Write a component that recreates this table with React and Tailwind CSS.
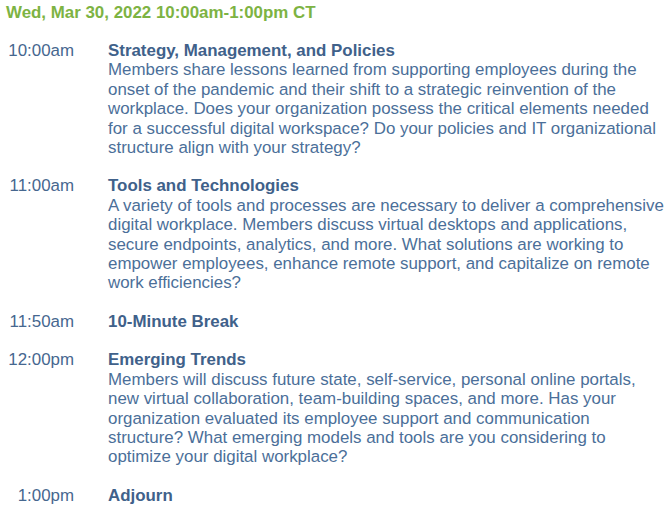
import React from "react";

const sessions = [
  {
    time: "10:00am",
    title: "Strategy, Management, and Policies",
    body: "Members share lessons learned from supporting employees during the onset of the pandemic and their shift to a strategic reinvention of the workplace. Does your organization possess the critical elements needed for a successful digital workspace? Do your policies and IT organizational structure align with your strategy?",
  },
  {
    time: "11:00am",
    title: "Tools and Technologies",
    body: "A variety of tools and processes are necessary to deliver a comprehensive digital workplace. Members discuss virtual desktops and applications, secure endpoints, analytics, and more. What solutions are working to empower employees, enhance remote support, and capitalize on remote work efficiencies?",
  },
  { time: "11:50am", title: "10-Minute Break" },
  {
    time: "12:00pm",
    title: "Emerging Trends",
    body: "Members will discuss future state, self-service, personal online portals, new virtual collaboration, team-building spaces, and more. Has your organization evaluated its employee support and communication structure? What emerging models and tools are you considering to optimize your digital workplace?",
  },
  { time: "1:00pm", title: "Adjourn" },
];

export default function App() {
  return (
    <div className="w-[669px] h-[512px] bg-white overflow-hidden font-['Liberation_Sans',Arial,sans-serif] text-[16.9px] leading-[19.4px]">
      <h1 className="pl-[6px] pt-[3px] text-[16.9px] leading-[20px] font-bold text-[#7db343]">
        Wed, Mar 30, 2022 10:00am-1:00pm CT
      </h1>
      <div className="mt-[18px] flex flex-col gap-[19px]">
        {sessions.map((s) => (
          <div key={s.time} className="flex">
            <div className="w-[74px] shrink-0 text-right text-[#46678f]">{s.time}</div>
            <div className="ml-[34px] pr-[2px] flex-1">
              <div className="font-bold text-[#40618a]">{s.title}</div>
              {s.body && <p className="text-[#4b6f99]">{s.body}</p>}
            </div>
          </div>
        ))}
      </div>
    </div>
  );
}
